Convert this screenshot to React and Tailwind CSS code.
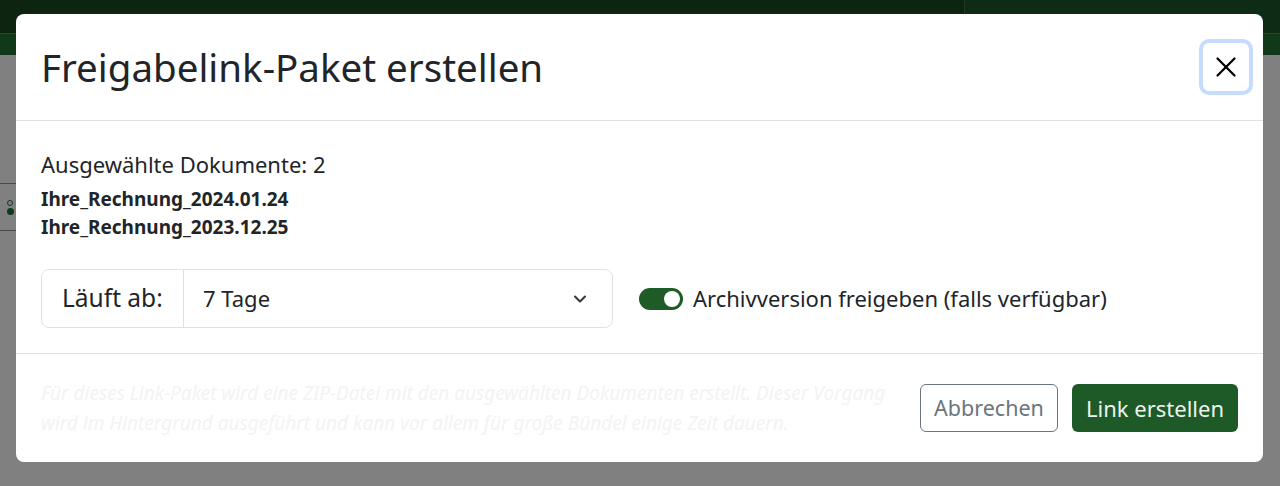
import React from 'react';
import { X, ChevronDown } from 'lucide-react';

const font = { fontFamily: '"Noto Sans", "Open Sans", sans-serif' };

const Backdrop = () => (
  <div className="absolute inset-0 flex flex-col bg-[#808080]">
    <div className="flex h-[33px] bg-[#0c2410]">
      <div className="w-[965px] border-r border-[#1f3a22]" />
      <div className="flex-1 bg-[#0e2b15]" />
    </div>
    <div className="h-[22px] border-t border-[#244a2a] bg-[#10391a]" />
    <div className="mt-[128px] h-[48px] w-[16px] border-y border-[#4a4a4a] flex flex-col items-center justify-center gap-[2px] pl-[4px]">
      <span className="h-[6px] w-[6px] rounded-full border border-[#0f3a18]" />
      <span className="h-[7px] w-[7px] rounded-full bg-[#0f3a18]" />
    </div>
  </div>
);

export default function App() {
  return (
    <div className="relative h-[486px] w-[1280px] overflow-hidden" style={font}>
      <Backdrop />
      <div className="absolute left-[16px] top-[14px] flex h-[448px] w-[1247px] flex-col rounded-[8px] bg-white text-[#212529]">
        <div className="flex h-[107px] items-center justify-between border-b border-[#dee2e6] pl-[25px] pr-[10px]">
          <h1 className="text-[38.5px] leading-none">Freigabelink-Paket erstellen</h1>
          <button className="flex h-[56px] w-[54px] items-center justify-center rounded-[10px] border-[4px] border-[#c6dcff]">
            <X size={34} strokeWidth={1.6} className="text-black" />
          </button>
        </div>

        <div className="flex flex-1 flex-col px-[25px] pt-[28px]">
          <p className="text-[22px] leading-[30px]">Ausgewählte Dokumente: 2</p>
          <div className="mt-[6px] text-[19px] font-bold leading-[28px]">
            <div>Ihre_Rechnung_2024.01.24</div>
            <div>Ihre_Rechnung_2023.12.25</div>
          </div>

          <div className="mt-[28px] flex items-center gap-[26px]">
            <div className="flex h-[59px] w-[572px] rounded-[8px] border border-[#dee2e6]">
              <div className="flex w-[142px] items-center border-r border-[#dee2e6] pl-[20px] text-[24.5px]">
                Läuft ab:
              </div>
              <div className="flex flex-1 items-center justify-between pl-[19px] pr-[22px] text-[22px]">
                <span>7 Tage</span>
                <ChevronDown size={20} strokeWidth={2.5} className="text-[#343a40]" />
              </div>
            </div>
            <div className="flex items-center gap-[10px]">
              <div className="flex h-[22px] w-[44px] items-center justify-end rounded-full bg-[#1e5b27] pr-[3px]">
                <span className="h-[16px] w-[16px] rounded-full bg-white" />
              </div>
              <span className="text-[22px]">Archivversion freigeben (falls verfügbar)</span>
            </div>
          </div>
        </div>

        <div className="flex h-[109px] items-center justify-between border-t border-[#dee2e6] pl-[25px] pr-[25px]">
          <p className="w-[870px] text-[19px] italic leading-[30px] text-[#f3f3f3]">
            Für dieses Link-Paket wird eine ZIP-Datei mit den ausgewählten Dokumenten erstellt. Dieser Vorgang wird im Hintergrund ausgeführt und kann vor allem für große Bündel einige Zeit dauern.
          </p>
          <div className="flex gap-[14px]">
            <button className="h-[48px] w-[138px] rounded-[6px] border border-[#6c757d] text-[21.5px] text-[#6c757d]">
              Abbrechen
            </button>
            <button className="h-[48px] w-[166px] rounded-[6px] bg-[#1e5a27] text-[22px] text-[#eef3ee]">
              Link erstellen
            </button>
          </div>
        </div>
      </div>
    </div>
  );
}
